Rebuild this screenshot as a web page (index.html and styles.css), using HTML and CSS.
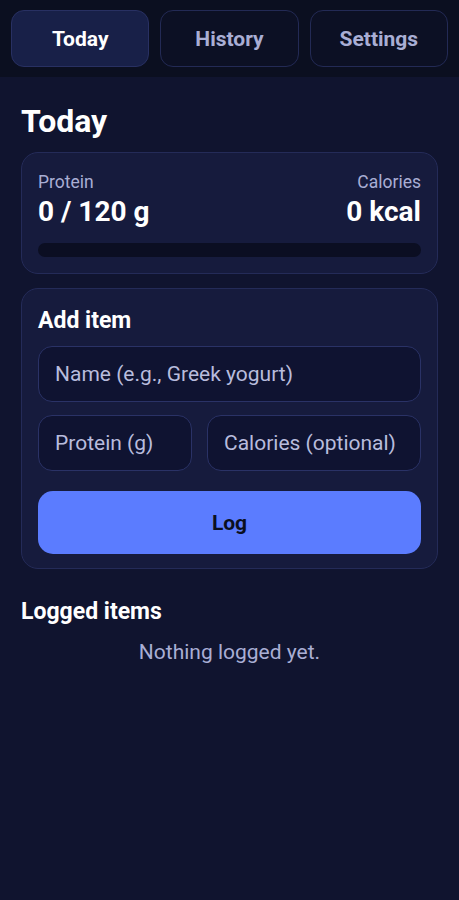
FILE: index.html
```html
<!DOCTYPE html>
<html lang="en">

<head>
    <meta charset="UTF-8">
    <meta name="viewport" content="width=device-width, initial-scale=1.0">
    <title>Protein Tracker</title>
    <link rel="stylesheet" href="styles.css">
</head>

<body>
    <nav class="tabs">
        <button class="tab active">Today</button>
        <button class="tab">History</button>
        <button class="tab">Settings</button>
    </nav>

    <main class="page">
        <h1>Today</h1>

        <section class="card summary">
            <div class="summary-row">
                <div class="stat">
                    <span class="stat-label">Protein</span>
                    <span class="stat-value">0 / 120 g</span>
                </div>
                <div class="stat right">
                    <span class="stat-label">Calories</span>
                    <span class="stat-value">0 kcal</span>
                </div>
            </div>
            <div class="progress">
                <div class="progress-fill" style="width: 0%"></div>
            </div>
        </section>

        <section class="card add-item">
            <h2>Add item</h2>
            <input type="text" class="field" placeholder="Name (e.g., Greek yogurt)">
            <div class="field-row">
                <input type="text" inputmode="decimal" class="field" placeholder="Protein (g)">
                <input type="text" inputmode="decimal" class="field" placeholder="Calories (optional)">
            </div>
            <button class="log-btn">Log</button>
        </section>

        <section class="logged">
            <h2>Logged items</h2>
            <p class="empty">Nothing logged yet.</p>
        </section>
    </main>
</body>

</html>
```

FILE: styles.css
```css
:root {
    --bar-bg: #0b0f20;
    --page-bg: #10142f;
    --card-bg: #161b3d;
    --card-border: #242b58;
    --field-bg: #0f1331;
    --field-border: #2a3266;
    --muted: #a9aed4;
    --accent: #5b7cff;
}

* {
    box-sizing: border-box;
}

body {
    font-family: Roboto, 'Noto Sans', sans-serif;
    color: #ffffff;
    background-color: var(--page-bg);
    margin: 0;
    min-height: 900px;
}

.tabs {
    display: grid;
    grid-template-columns: repeat(3, 1fr);
    gap: 11px;
    padding: 10px 11px;
    background-color: var(--bar-bg);
    height: 77px;
}

.tab {
    font-family: inherit;
    font-size: 21px;
    font-weight: 700;
    color: var(--muted);
    background-color: #0c1024;
    border: 1px solid #232a55;
    border-radius: 13px;
    height: 57px;
}

.tab.active {
    color: #ffffff;
    background-color: #182048;
    border-color: #283062;
}

.page {
    padding: 0 21px;
}

h1 {
    font-size: 32px;
    font-weight: 700;
    margin: 0;
    padding-top: 25px;
    height: 75px;
}

.card {
    background-color: var(--card-bg);
    border: 1px solid var(--card-border);
    border-radius: 17px;
    padding: 16px;
}

.summary {
    height: 122px;
    padding-top: 17px;
}

.summary-row {
    display: flex;
    justify-content: space-between;
}

.stat {
    display: flex;
    flex-direction: column;
}

.stat.right {
    align-items: flex-end;
}

.stat-label {
    font-size: 17.5px;
    color: var(--muted);
    line-height: 24px;
}

.stat-value {
    font-size: 28px;
    font-weight: 700;
    line-height: 36px;
}

.progress {
    height: 14px;
    margin-top: 13px;
    background-color: #0b0e22;
    border-radius: 7px;
    overflow: hidden;
}

.progress-fill {
    height: 100%;
    background-color: var(--accent);
}

.add-item {
    margin-top: 14px;
    display: flex;
    flex-direction: column;
    padding-bottom: 14px;
}

.add-item h2 {
    font-size: 23px;
    font-weight: 700;
    margin: 3px 0 12px;
    line-height: 26px;
}

.field {
    font-family: inherit;
    font-size: 21px;
    color: #ffffff;
    background-color: var(--field-bg);
    border: 1px solid var(--field-border);
    border-radius: 14px;
    height: 56px;
    padding: 0 16px;
    width: 100%;
    min-width: 0;
}

.field::placeholder {
    color: #b8bcdd;
}

.field-row {
    display: grid;
    grid-template-columns: 154px 1fr;
    gap: 15px;
    margin-top: 13px;
}

.log-btn {
    font-family: inherit;
    font-size: 21px;
    font-weight: 700;
    color: #0b1020;
    background-color: var(--accent);
    border: none;
    border-radius: 15px;
    height: 63px;
    margin-top: 20px;
}

.logged {
    padding-top: 29px;
}

.logged h2 {
    font-size: 23px;
    font-weight: 700;
    margin: 0;
    line-height: 28px;
}

.empty {
    text-align: center;
    font-size: 21px;
    color: var(--muted);
    margin: 14px 0 0;
}
```
